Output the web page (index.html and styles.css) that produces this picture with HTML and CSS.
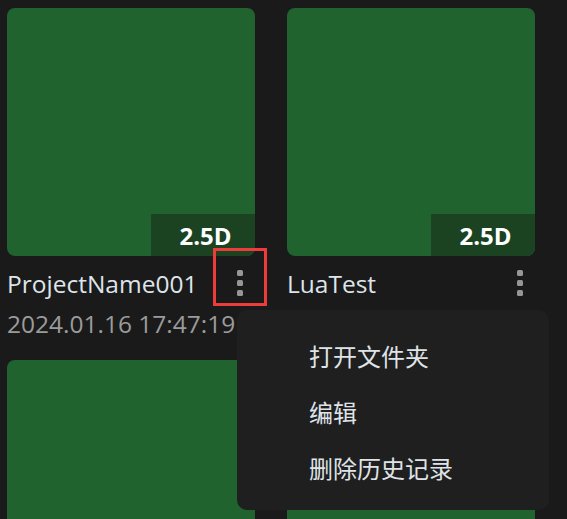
FILE: index.html
```html
<!DOCTYPE html>
<html lang="zh">
<head>
<meta charset="utf-8">
<title>Projects</title>
<link rel="stylesheet" href="styles.css">
</head>
<body>
<div class="grid">
  <div class="card">
    <div class="thumb"><span class="badge">2.5D</span></div>
    <div class="title-row">
      <span class="name">ProjectName001</span>
      <span class="more"><i></i><i></i><i></i></span>
    </div>
    <div class="date">2024.01.16 17:47:19</div>
    <div class="highlight"></div>
  </div>
  <div class="card">
    <div class="thumb"><span class="badge">2.5D</span></div>
    <div class="title-row">
      <span class="name">LuaTest</span>
      <span class="more"><i></i><i></i><i></i></span>
    </div>
    <div class="date"></div>
  </div>
  <div class="card">
    <div class="thumb"></div>
  </div>
  <div class="card">
    <div class="thumb"></div>
  </div>
  <div class="menu">
    <div class="menu-item">打开文件夹</div>
    <div class="menu-item">编辑</div>
    <div class="menu-item">删除历史记录</div>
  </div>
</div>
</body>
</html>
```
FILE: styles.css
```css
html, body {
  margin: 0;
  padding: 0;
  overflow: hidden;
  background: #1a1a1a;
  height: 100%;
}
body {
  font-family: "Open Sans", "Noto Sans CJK SC", sans-serif;
  color: #dfe3e8;
}
.grid {
  position: relative;
  display: grid;
  grid-template-columns: 248px 248px;
  column-gap: 32px;
  row-gap: 20px;
  padding: 8px 0 0 7px;
}
.card {
  position: relative;
  display: flex;
  flex-direction: column;
}
.thumb {
  position: relative;
  width: 248px;
  height: 248px;
  background: #20632f;
  border-radius: 8px;
  overflow: hidden;
}
.badge {
  position: absolute;
  right: 0;
  bottom: 0;
  width: 104px;
  height: 42px;
  box-sizing: border-box;
  padding-left: 5px;
  background: #1b4322;
  color: #ffffff;
  font-weight: 700;
  font-size: 24px;
  display: flex;
  align-items: center;
  justify-content: center;
}
.title-row {
  margin-top: 12px;
  height: 32px;
  display: flex;
  align-items: center;
  justify-content: space-between;
}
.name {
  font-size: 24.5px;
  line-height: 32px;
  color: #dfe4ea;
}
.more {
  display: flex;
  flex-direction: column;
  gap: 4px;
  margin-right: 12px;
  margin-top: -2px;
}
.more i {
  display: block;
  width: 6px;
  height: 6px;
  border-radius: 1.5px;
  background: #969696;
}
.date {
  margin-top: 8px;
  height: 32px;
  font-size: 24.5px;
  line-height: 32px;
  color: #9b9b9b;
}
.highlight {
  position: absolute;
  left: 206px;
  top: 240px;
  width: 54px;
  height: 58px;
  box-sizing: border-box;
  border: 3px solid #ee3b3b;
}
.menu {
  position: absolute;
  left: 237px;
  top: 310px;
  width: 312px;
  height: 200px;
  box-sizing: border-box;
  padding: 18px 0 0 72px;
  background: #1f1f1f;
  border-radius: 10px;
}
.menu-item {
  font-family: "Noto Sans CJK SC", sans-serif;
  font-size: 24px;
  line-height: 56px;
  color: #dfe3e8;
}
```
